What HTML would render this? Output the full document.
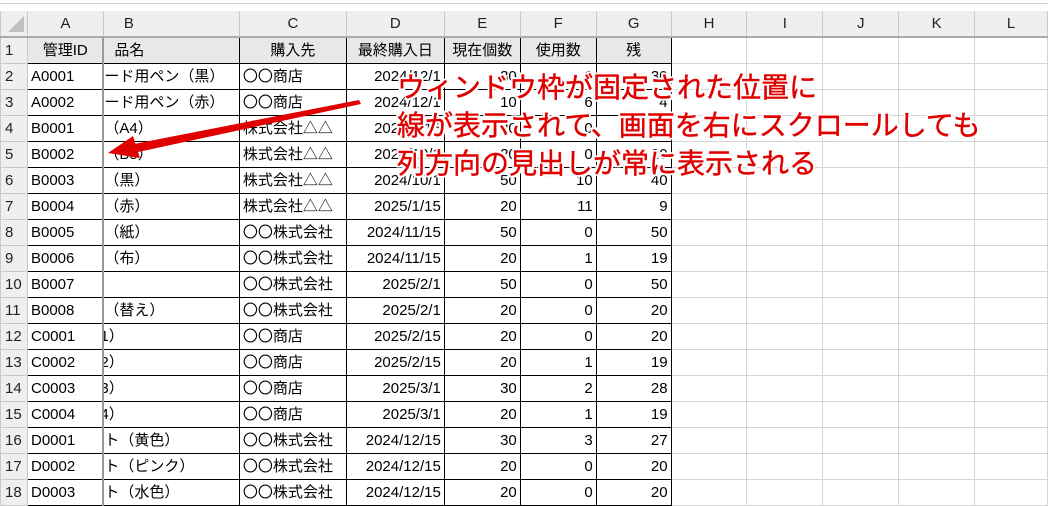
<!DOCTYPE html>
<html><head><meta charset="utf-8"><style>
body{margin:0;width:1048px;height:506px;overflow:hidden;background:#fff;font-family:"Liberation Sans","Noto Sans CJK JP",sans-serif;position:relative}
.top{position:absolute;left:0;top:0;width:1048px;height:3px;background:#fff;border-bottom:1px solid #d0d0d0}
table{position:absolute;left:0;top:11px;border-collapse:collapse;table-layout:fixed;font-size:15px;color:#000}
td{height:25px;padding:0 3px;white-space:nowrap;overflow:hidden;border:1px solid #d4d4d4;line-height:25px}
tr.h td{background:#efefef;text-align:center;color:#222;border-color:#c8c8c8;border-bottom:2px solid #aaa;border-top:none}
td.rh{background:#efefef;text-align:left;padding-left:4px;color:#222;border-color:#c8c8c8}
td.d{border:1px solid #000}
td.g{background:#e8e8e8;text-align:center}
.r{text-align:right}
td.b{padding-left:0;border-left:2px solid #999}
.ann{position:absolute;left:397px;top:69px;color:#e00000;font-size:28px;line-height:38px;font-family:"Liberation Sans","Noto Sans CJK JP",sans-serif;
text-shadow:2px 0 #fff,-2px 0 #fff,0 2px #fff,0 -2px #fff,2px 2px #fff,-2px -2px #fff,2px -2px #fff,-2px 2px #fff,0 0 3px #888;white-space:nowrap;-webkit-text-stroke:0.4px #e00000}
</style></head><body>
<div class="top"></div>
<table>
<colgroup><col style="width:27px"><col style="width:76px"><col style="width:136px"><col style="width:107px"><col style="width:98px"><col style="width:76px"><col style="width:76px"><col style="width:75px"><col style="width:76px"><col style="width:76px"><col style="width:76px"><col style="width:76px"><col style="width:73px"></colgroup>
<tr class="h"><td style="background:#efefef"></td><td>A</td><td style="text-align:left;padding-left:20px">B</td><td>C</td><td>D</td><td>E</td><td>F</td><td>G</td><td>H</td><td>I</td><td>J</td><td>K</td><td>L</td></tr>
<tr><td class="rh">1</td><td class="d g">管理ID</td><td class="d g b" style="text-align:left;padding-left:10px">品名</td><td class="d g">購入先</td><td class="d g">最終購入日</td><td class="d g">現在個数</td><td class="d g">使用数</td><td class="d g">残</td><td></td><td></td><td></td><td></td><td></td></tr>
<tr><td class="rh">2</td><td class="d">A0001</td><td class="d b">ード用ペン（黒）</td><td class="d">〇〇商店</td><td class="d r">2024/12/1</td><td class="d r">30</td><td class="d r">0</td><td class="d r">30</td><td></td><td></td><td></td><td></td><td></td></tr>
<tr><td class="rh">3</td><td class="d">A0002</td><td class="d b">ード用ペン（赤）</td><td class="d">〇〇商店</td><td class="d r">2024/12/1</td><td class="d r">10</td><td class="d r">6</td><td class="d r">4</td><td></td><td></td><td></td><td></td><td></td></tr>
<tr><td class="rh">4</td><td class="d">B0001</td><td class="d b">（A4）</td><td class="d">株式会社△△</td><td class="d r">2025/1/15</td><td class="d r">20</td><td class="d r">0</td><td class="d r">20</td><td></td><td></td><td></td><td></td><td></td></tr>
<tr><td class="rh">5</td><td class="d">B0002</td><td class="d b">（B5）</td><td class="d">株式会社△△</td><td class="d r">2024/10/1</td><td class="d r">20</td><td class="d r">0</td><td class="d r">20</td><td></td><td></td><td></td><td></td><td></td></tr>
<tr><td class="rh">6</td><td class="d">B0003</td><td class="d b">（黒）</td><td class="d">株式会社△△</td><td class="d r">2024/10/1</td><td class="d r">50</td><td class="d r">10</td><td class="d r">40</td><td></td><td></td><td></td><td></td><td></td></tr>
<tr><td class="rh">7</td><td class="d">B0004</td><td class="d b">（赤）</td><td class="d">株式会社△△</td><td class="d r">2025/1/15</td><td class="d r">20</td><td class="d r">11</td><td class="d r">9</td><td></td><td></td><td></td><td></td><td></td></tr>
<tr><td class="rh">8</td><td class="d">B0005</td><td class="d b">（紙）</td><td class="d">〇〇株式会社</td><td class="d r">2024/11/15</td><td class="d r">50</td><td class="d r">0</td><td class="d r">50</td><td></td><td></td><td></td><td></td><td></td></tr>
<tr><td class="rh">9</td><td class="d">B0006</td><td class="d b">（布）</td><td class="d">〇〇株式会社</td><td class="d r">2024/11/15</td><td class="d r">20</td><td class="d r">1</td><td class="d r">19</td><td></td><td></td><td></td><td></td><td></td></tr>
<tr><td class="rh">10</td><td class="d">B0007</td><td class="d b"></td><td class="d">〇〇株式会社</td><td class="d r">2025/2/1</td><td class="d r">50</td><td class="d r">0</td><td class="d r">50</td><td></td><td></td><td></td><td></td><td></td></tr>
<tr><td class="rh">11</td><td class="d">B0008</td><td class="d b">（替え）</td><td class="d">〇〇株式会社</td><td class="d r">2025/2/1</td><td class="d r">20</td><td class="d r">0</td><td class="d r">20</td><td></td><td></td><td></td><td></td><td></td></tr>
<tr><td class="rh">12</td><td class="d">C0001</td><td class="d b"><span style="margin-left:-4px">1）</span></td><td class="d">〇〇商店</td><td class="d r">2025/2/15</td><td class="d r">20</td><td class="d r">0</td><td class="d r">20</td><td></td><td></td><td></td><td></td><td></td></tr>
<tr><td class="rh">13</td><td class="d">C0002</td><td class="d b"><span style="margin-left:-4px">2）</span></td><td class="d">〇〇商店</td><td class="d r">2025/2/15</td><td class="d r">20</td><td class="d r">1</td><td class="d r">19</td><td></td><td></td><td></td><td></td><td></td></tr>
<tr><td class="rh">14</td><td class="d">C0003</td><td class="d b"><span style="margin-left:-4px">3）</span></td><td class="d">〇〇商店</td><td class="d r">2025/3/1</td><td class="d r">30</td><td class="d r">2</td><td class="d r">28</td><td></td><td></td><td></td><td></td><td></td></tr>
<tr><td class="rh">15</td><td class="d">C0004</td><td class="d b"><span style="margin-left:-4px">4）</span></td><td class="d">〇〇商店</td><td class="d r">2025/3/1</td><td class="d r">20</td><td class="d r">1</td><td class="d r">19</td><td></td><td></td><td></td><td></td><td></td></tr>
<tr><td class="rh">16</td><td class="d">D0001</td><td class="d b">ト（黄色）</td><td class="d">〇〇株式会社</td><td class="d r">2024/12/15</td><td class="d r">30</td><td class="d r">3</td><td class="d r">27</td><td></td><td></td><td></td><td></td><td></td></tr>
<tr><td class="rh">17</td><td class="d">D0002</td><td class="d b">ト（ピンク）</td><td class="d">〇〇株式会社</td><td class="d r">2024/12/15</td><td class="d r">20</td><td class="d r">0</td><td class="d r">20</td><td></td><td></td><td></td><td></td><td></td></tr>
<tr><td class="rh">18</td><td class="d">D0003</td><td class="d b">ト（水色）</td><td class="d">〇〇株式会社</td><td class="d r">2024/12/15</td><td class="d r">20</td><td class="d r">0</td><td class="d r">20</td><td></td><td></td><td></td><td></td><td></td></tr>
</table>
<svg style="position:absolute;left:0;top:0" width="1048" height="506">
<polygon points="8,32 24,16 24,32" fill="#c0c0c0"/>
<polygon points="359,100 361,104 138,152 134,144" fill="#e00000"/>
<polygon points="108,153 133,136 140,158" fill="#e00000"/>
</svg>
<div class="ann">ウィンドウ枠が固定された位置に<br>線が表示されて、画面を右にスクロールしても<br>列方向の見出しが常に表示される</div>
</body></html>
